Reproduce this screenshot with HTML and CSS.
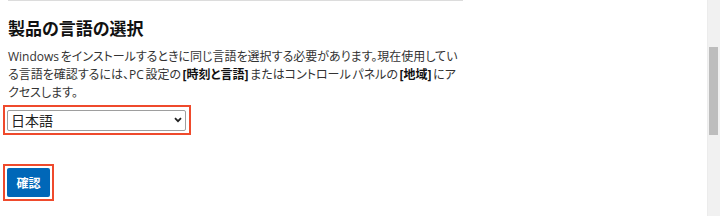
FILE: index.html
```html
<!DOCTYPE html>
<html>
    <head>
        <title>製品の言語の選択</title>
        <link rel="stylesheet" href="styles.css">
    </head>
<body>
    <div class="page">
        <div class="content">
            <div class="rule"></div>
            <h2 class="title">製品の言語の選択</h2>
            <p class="desc">Windows をインストールするときに同じ言語を選択する必要があります。現在使用している言語を確認するには、PC 設定の <b>[時刻と言語]</b> またはコントロール パネルの <b>[地域]</b> にアクセスします。</p>
            <div class="mark mark-select">
                <div class="select-wrap">
                    <select class="lang">
                        <option>日本語</option>
                    </select>
                    <svg class="chevron" width="8" height="6" viewBox="0 0 8 6"><path d="M1 1.2 L4 4.2 L7 1.2" fill="none" stroke="#222" stroke-width="1.8"/></svg>
                </div>
            </div>
            <div class="mark mark-button">
                <button class="confirm">確認</button>
            </div>
        </div>
        <div class="scrollbar">
            <div class="thumb"></div>
        </div>
    </div>
</body>
</html>
```

FILE: styles.css
```css
body {
    margin: 0;
    font-family: "Open Sans", "Noto Sans CJK JP", sans-serif;
    font-feature-settings: "palt";
    color: #333;
    background: #fff;
}

.page {
    display: flex;
    height: 216px;
    overflow: hidden;
}

.content {
    flex: 1;
    padding-left: 8px;
}

.rule {
    width: 455px;
    border-top: 1px solid #dcdcdc;
}

.title {
    margin: 17px 0 0 0;
    font-size: 17px;
    font-weight: bold;
    line-height: 22px;
    color: #111;
}

.desc {
    width: 457px;
    margin: 8px 0 0 0;
    font-size: 12px;
    line-height: 18px;
    word-spacing: -1.5px;
}

.desc b {
    color: #111;
    line-height: 1;
}

.mark {
    display: inline-block;
    border: 2px solid #ef4a2c;
    padding: 2px;
    margin-left: -5px;
}

.mark-select {
    display: block;
    width: 180px;
    margin-top: 3px;
}

.select-wrap {
    position: relative;
}

.lang {
    appearance: none;
    width: 179px;
    height: 21px;
    padding: 0 0 0 3px;
    border: 1px solid #9e9e9e;
    border-radius: 2px;
    background: #fff;
    font-family: "Open Sans", "Noto Sans CJK JP", sans-serif;
    font-size: 14px;
    color: #222;
}

.chevron {
    position: absolute;
    right: 5px;
    top: 8px;
}

.mark-button {
    margin-top: 29px;
}

.confirm {
    display: block;
    width: 43px;
    height: 29px;
    border: none;
    border-radius: 2px;
    background-color: #0067b8;
    color: #fff;
    font-family: "Open Sans", "Noto Sans CJK JP", sans-serif;
    font-size: 12px;
    font-weight: bold;
    cursor: pointer;
}

.scrollbar {
    width: 12px;
    background: #f1f1f1;
    border-left: 1px solid #ececec;
}

.thumb {
    width: 9px;
    height: 88px;
    margin: 47px 0 0 1px;
    background: #bdbdbd;
}
```
